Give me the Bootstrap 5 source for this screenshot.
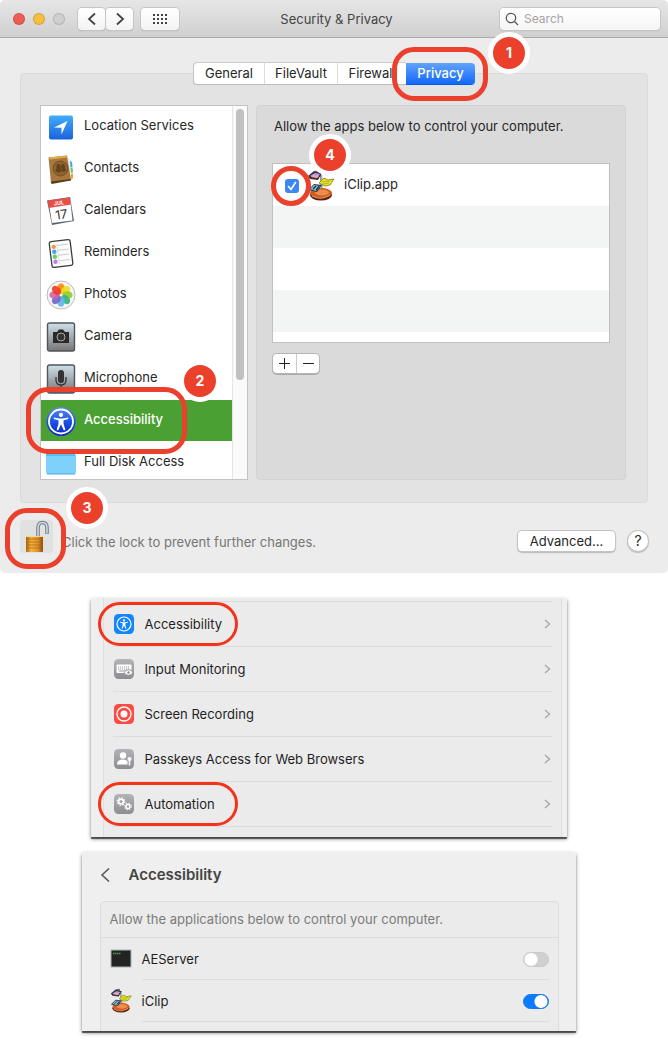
<!DOCTYPE html>
<html lang="en">
<head>
<meta charset="utf-8">
<meta name="viewport" content="width=device-width, initial-scale=1">
<title>Security &amp; Privacy</title>
<link href="https://cdn.jsdelivr.net/npm/bootstrap@5.3.0/dist/css/bootstrap.min.css" rel="stylesheet">
<style>
:root{--mark:#eb402c}
body{font-family:Inter,"Liberation Sans",sans-serif;font-size:13px;line-height:20px;color:#262626;background:#fff}
button{font-size:13px;line-height:18px;color:#262626}
svg{display:block;flex:none}
.prefs{background:#ececec;border-radius:5px}
.toolbar{height:38px;padding:0 8px 0 13px;background:linear-gradient(#e6e6e6,#d0d0d0);border-bottom:1px solid #a9a9a9;border-radius:5px 5px 0 0}
.side{flex:1 1 0}
.light{width:12px;height:12px;border-radius:50%;border:1px solid #0002}
.tool{height:22px;width:27px;padding:0;border:0;border-radius:4px;background:linear-gradient(#fff,#f3f3f3);box-shadow:0 0 0 1px #c6c6c6,0 1px 1px #999;display:flex;align-items:center;justify-content:center}
.tool.wide{width:38px}
.nav-tools{margin-left:13px;gap:1px}
.find{width:160px;height:22px;border-radius:4px;background:linear-gradient(#fff,#f5f5f5);box-shadow:0 0 0 1px #c6c6c6,0 1px 1px #aaa;padding-left:5px;gap:5px}
.find input{border:0;background:none;outline:0;padding:0;font-size:12px;line-height:18px;width:120px}
.find input::placeholder{color:#a4a4a4;opacity:1}
.content{padding:25px 20px 20px}
.tabs{height:21px;margin-bottom:-11px;z-index:2}
.tabs button{height:21px;padding:0 0 1px;border:0;background:#fff;border-right:1px solid #ddd;box-shadow:0 1px 0 #bbb,0 -1px 0 #ccc}
.tabs .t1{width:72px;border-radius:4px 0 0 4px;border-left:1px solid #c4c4c4}
.tabs .t2{width:73px}
.tabs .t3{width:68px;border-right:0}
.tabs .on{width:69px;color:#fff;font-weight:500;border:0;border-radius:0 4px 4px 0;background:linear-gradient(#63a3f8,#1168fb);box-shadow:0 1px 0 #0c5be0}
.ring{position:absolute;border:5px solid var(--mark);border-radius:22px;pointer-events:none;z-index:3}
.num{position:absolute;width:42px;height:42px;border:5px solid #fff;border-radius:50%;background:var(--mark);color:#fff;font:700 14px/32px Inter,"Liberation Sans",sans-serif;text-align:center;z-index:4}
.ring-tab{inset:-16px -13px -17px auto;width:96px}
.num-tab{right:-55px;top:-31px}
.panel-box{background:#e3e3e3;border:1px solid #dadada;border-radius:4px;padding:31px 21px 22px 19px;gap:8px}
.sources{width:208px;height:375px;flex:none}
.frame{border:1px solid #c3c3c3;background:#fff;height:375px;overflow:hidden}
.source{height:42px;border:0;background:none;padding:0 0 0 5px;gap:8px;text-align:left;display:flex;align-items:center;width:100%;flex:none}
.source span{padding-bottom:4px}
.source.on{background:#4ba033;height:41px;margin-bottom:1px;color:#fff;font-weight:500}
.track{width:15px;background:#fafafa;border-left:1px solid #e5e5e5;padding:3px}
.thumb{width:8px;height:271px;border-radius:4px;background:#c1c1c1}
.ring-source{left:-14px;top:282px;width:161px;height:67px}
.num-source{left:139px;top:255px}
.detail{background:#dadada;border:1px solid #d2d2d2;border-radius:4px;padding:10px 15px 0}
.lead-in{padding-left:2px}
.apps{margin-top:27px;border:1px solid #c0c0c0;background:repeating-linear-gradient(#fff 0 42px,#f3f5f5 42px 84px);height:180px}
.app-row{height:42px;padding-left:12px}
.app-row input{appearance:none;width:14px;height:14px;margin:2px 0 0;border-radius:3px;background:#3d87f5 url("data:image/svg+xml,%3Csvg xmlns='http://www.w3.org/2000/svg' viewBox='0 0 14 14'%3E%3Cpath d='M3.5 7.5l2.5 3 4.5-7' fill='none' stroke='%23fff' stroke-width='1.6' stroke-linecap='round'/%3E%3C/svg%3E")}
.app-row label{padding:0 0 2px 1px}
.ring-check{left:-2px;top:2px;width:40px;height:40px;border-radius:50%}
.num-app{left:36px;top:-30px}
.pm{margin-top:11px;height:19px;width:46px;border-radius:4px;background:#fff;box-shadow:0 0 0 1px #b5b5b5,0 1px 0 1px #aaa;margin-left:1px}
.pm button{border:0;background:none;padding:0;width:23px;display:flex;align-items:center;justify-content:center}
.pm button+button{border-left:1px solid #ccc}
.foot{margin-top:17px;gap:9px}
.lock{width:33px;height:33px;border:0;border-radius:4px;background:#e1e1e1;padding:0}
.ring-lock{left:-15px;top:-12px;width:61px;height:61px}
.num-lock{left:46px;top:-33px}
.hint{color:#767676;padding-top:12px}
.foot-actions{padding-top:11px;gap:13px}
.plain{height:20px;width:97px;padding:0 0 1px;border:0;border-radius:4px;background:#fff;box-shadow:0 0 0 1px #c4c4c4,0 1px 1px 1px #bbb}
.help{width:20px;border-radius:50%;font-size:14px}
.shots{padding-right:11px}
.shot{box-shadow:0 2px 1px #0009,0 2px 4px #0006;background:#efefef;overflow:hidden;border-radius:2px 2px 0 0}
.settings{width:calc(100% - 40px);max-width:476px;margin-top:25px;padding:0 5px 0 12px}
.settings ul{border:1px solid #dedede;border-width:0 1px;background:#ebebeb;padding:3px 9px 10px}
.settings li{border-top:1px solid #dcdcdc;height:45px}
.settings li:last-child{border-bottom:1px solid #dcdcdc;height:46px}
.settings a{height:44px;gap:11px;padding:0 1px;color:#1f1f1f;text-decoration:none}
.oval{position:absolute;left:-15px;top:0;width:140px;height:44px;border:3px solid #f3341b;border-radius:22px;pointer-events:none}
.access{width:calc(100% - 20px);max-width:494px;margin-top:15px;margin-bottom:15px;height:179px;padding:13px 17px 0 18px}
.access h2{font-size:15px;line-height:20px;font-weight:600;color:#444;margin:0}
.group{margin-top:16px;border:1px solid #dcdcdc;border-radius:4px;background:#ebebeb;height:150px}
.group p{height:36px;line-height:35px;padding-left:9px;margin:0;border-bottom:1px solid #dcdcdc;color:#7b7b7b}
.app-line{padding:0 9px;gap:10px}
.app-line>div{height:42px;border-bottom:1px solid #dcdcdc}
.app-line label{color:#1f1f1f}
.switch{appearance:none;width:26px;height:15px;border-radius:8px;margin:2px 0 0;background:radial-gradient(circle at 7px 50%,#fff 6px,#0000 7px),#d0d0d0;border:1px solid #c8c8c8}
.switch:checked{background:radial-gradient(circle at 17px 50%,#fff 6px,#0000 7px),#0d7bff;border-color:#1677ee}
</style>
</head>
<body>
<svg width="0" height="0" class="position-absolute" aria-hidden="true">
<defs>
<linearGradient id="blue" x2="0" y2="1"><stop stop-color="#42adfb"/><stop offset="1" stop-color="#1b62dc"/></linearGradient>
<linearGradient id="metal" x2="0" y2="1"><stop stop-color="#cfe0ea"/><stop offset="1" stop-color="#777674"/></linearGradient>
<linearGradient id="grey" x2="0" y2="1"><stop stop-color="#b4b4b8"/><stop offset="1" stop-color="#8c8c91"/></linearGradient>
<linearGradient id="orb" x2="0" y2="1"><stop stop-color="#5d8ee9"/><stop offset=".5" stop-color="#1d52e5"/><stop offset="1" stop-color="#0721c4"/></linearGradient>
<linearGradient id="brass"><stop stop-color="#a8620c"/><stop offset=".3" stop-color="#f6b441"/><stop offset=".7" stop-color="#df922a"/><stop offset="1" stop-color="#8a4c08"/></linearGradient>
</defs>
<symbol id="figure" viewBox="0 0 20 20"><circle cx="10" cy="4" r="1.9"/><path d="M3.500 6.300L8.500 7.200h3l5-.9.2 1.400-4.400 1.100v3.200l1.700 5.600-1.400.5L10 12.600 7.400 18.100l-1.400-.5 1.700-5.600V8.800L3.300 7.700z"/></symbol>
<symbol id="iclip" viewBox="0 0 28 32">
<path d="M14 6l1 17" stroke="#777" stroke-width="2"/><path d="M15 6v15" stroke="#ddd"/>
<ellipse cx="14" cy="26" rx="11" ry="5.500" fill="#5b210c"/><ellipse cx="14" cy="24" rx="11" ry="5" fill="#cf5c23"/><ellipse cx="15" cy="23.500" rx="7" ry="3" fill="#ee8c4c"/><path d="M5 27q9 5 18-1" stroke="#f0a06c" fill="none"/>
<path d="M1 7l6-5 8 2-4 7-8-1z" fill="#3b3140"/><path d="M3 7l5-3 5 1-3 4z" fill="#b89be8"/><path d="M4 8l6 1 2-2-6-1z" fill="#f3a7a4"/><path d="M7 2l5-1 1 3" fill="#555"/>
<path d="M12 14l5-5 4 2 6-1-4 6-5 1z" fill="#e8e51f" stroke="#77761a" stroke-width=".8"/><path d="M15 13l8-1M16 15l6-1" stroke="#a5a31a" stroke-width=".7"/>
<path d="M1 21l6-6 8 1-5 7z" fill="#263c4c"/><path d="M3 20l4-4 6 1-4 5z" fill="#83b8d5"/><path d="M6 20l3-3M9 21l3-4" stroke="#1b3040" stroke-width="1.200"/>
</symbol>
</svg>

<main class="prefs">
<header class="toolbar d-flex align-items-center">
  <div class="side d-flex align-items-center">
    <div class="d-flex gap-2"><i class="light" style="background:#ee5c56"></i><i class="light" style="background:#f7be3e"></i><i class="light" style="background:#cfcfcf"></i></div>
    <div class="nav-tools d-flex">
    <button class="tool" type="button" aria-label="Back"><svg width="10" height="14" fill="none" stroke="#444" stroke-width="1.800"><path d="M8 1.500L2 7l6 5.500"/></svg></button>
    <button class="tool" type="button" aria-label="Forward"><svg width="10" height="14" fill="none" stroke="#444" stroke-width="1.800"><path d="M2 1.500L8 7l-6 5.500"/></svg></button>
    </div>
    <button class="tool wide ms-2" type="button" aria-label="Show all"><svg width="16" height="12" stroke="#444" stroke-width="2" stroke-dasharray="2 2"><path d="M1 2h14M1 6h14M1 10h14"/></svg></button>
  </div>
  <div style="color:#444">Security &amp; Privacy</div>
  <div class="side d-flex justify-content-end"><label class="find d-flex align-items-center"><svg width="14" height="14" fill="none" stroke="#555" stroke-width="1.300"><circle cx="6" cy="6" r="4.700"/><path d="M9.500 9.500L13 13"/></svg><input type="search" placeholder="Search" aria-label="Search"></label></div>
</header>

<div class="content">
  <nav class="d-flex justify-content-center">
    <div class="tabs d-flex position-relative">
      <button class="t1" type="button">General</button><button class="t2" type="button">FileVault</button><button class="t3" type="button">Firewall</button><button class="on" type="button">Privacy</button>
      <div class="ring ring-tab"></div><div class="num num-tab">1</div>
    </div>
  </nav>

  <section class="panel-box d-flex">
    <div class="sources position-relative">
      <div class="frame d-flex">
        <div class="d-flex flex-column flex-grow-1">
          <button class="source" type="button"><svg width="30" height="30" viewBox="0 0 30 30"><rect x="3" y="3.500" width="24" height="24" rx="2" fill="url(#blue)"/><path d="M8 15.500L21.500 9 15.500 22.500v-6.800z" fill="#fff"/></svg><span>Location Services</span></button>
          <button class="source" type="button"><svg width="30" height="30" viewBox="0 0 30 30"><path d="M22 4l3 2 1 20-4 1z" fill="#eee"/><path d="M24 7l2 1 .5 5-2 .5z" fill="#41a5e8"/><path d="M24.500 14l2-.5.5 5-2 .5z" fill="#5ed064"/><path d="M25 20l2-.5v5l-2 .5z" fill="#f39d2b"/><path d="M2.500 3.500L21 1.500l4 24.500-20 3z" fill="#a6783e"/><path d="M2.500 3.500L21 1.500l.5 2L4 5.500z" fill="#e0aa48"/><path d="M5 27.500l20-2.500v1.500L5.500 30z" fill="#5b3c1c"/><circle cx="14.500" cy="14.500" r="7.500" fill="#8e6330" stroke="#76501f"/><path d="M9 17q2-2 1.500-4 0-3 2-3t2 3q0 3 1.500 3.500-1 2-3.500 2zM15 13q0-3 2-3t2 3q0 3 1.500 3-1 2-4 2z" fill="#65431c"/></svg><span>Contacts</span></button>
          <button class="source" type="button"><svg width="30" height="30" viewBox="0 0 30 30"><path d="M1 4.500L24 1l4 24-22 4z" fill="#56646c"/><path d="M2.500 5L24 2l2.500 22.500L6 27z" fill="#fff"/><path d="M1.500 4.500L24 1.500l1 7L3 12z" fill="#e65048"/><g transform="rotate(-8 14 15)" font-family="Inter,sans-serif" text-anchor="middle"><text x="14" y="9" font-size="5.500" font-weight="700" fill="#fff">JUL</text><text x="15" y="23" font-size="12.500" fill="#333">17</text></g></svg><span>Calendars</span></button>
          <button class="source" type="button"><svg width="30" height="30" viewBox="0 0 30 30"><g transform="rotate(-7 15 15)"><rect x="4.500" y="2.500" width="21" height="26" rx="2" fill="#fcfcfc" stroke="#3d3d3d" stroke-width="1.300"/><path d="M12 5v21" stroke="#ccc" stroke-width=".5"/><path d="M12 7h11M12 12h11M12 17h11M12 22.500h11" stroke="#bbb" stroke-width=".7"/><circle cx="8.500" cy="8" r="2.200" fill="#f59644"/><circle cx="8.500" cy="13" r="2.200" fill="#41a1f4"/><circle cx="8.500" cy="18" r="2.200" fill="#67d354"/><circle cx="8.500" cy="23" r="2.200" fill="#c17de5"/></g></svg><span>Reminders</span></button>
          <button class="source" type="button"><svg width="30" height="30" viewBox="0 0 30 30"><circle cx="15" cy="15" r="14" fill="#f6f6f6" stroke="#bbb"/><g><ellipse cx="15" cy="8.500" rx="3.800" ry="5.200" fill="#f6951e"/><ellipse cx="15" cy="8.500" rx="3.800" ry="5.200" fill="#ecdf22" transform="rotate(45 15 15)" opacity=".9"/><ellipse cx="15" cy="8.500" rx="3.800" ry="5.200" fill="#93cb2e" transform="rotate(90 15 15)" opacity=".9"/><ellipse cx="15" cy="8.500" rx="3.800" ry="5.200" fill="#35b27c" transform="rotate(135 15 15)" opacity=".9"/><ellipse cx="15" cy="8.500" rx="3.800" ry="5.200" fill="#62b5ea" transform="rotate(180 15 15)" opacity=".9"/><ellipse cx="15" cy="8.500" rx="3.800" ry="5.200" fill="#7266c8" transform="rotate(225 15 15)" opacity=".9"/><ellipse cx="15" cy="8.500" rx="3.800" ry="5.200" fill="#d067a8" transform="rotate(270 15 15)" opacity=".9"/><ellipse cx="15" cy="8.500" rx="3.800" ry="5.200" fill="#ee3a26" transform="rotate(315 15 15)" opacity=".9"/></g></svg><span>Photos</span></button>
          <button class="source" type="button"><svg width="30" height="30" viewBox="0 0 30 30"><rect x="1.500" y="1" width="27" height="28" rx="2" fill="url(#metal)" stroke="#4d565e" stroke-width="1.400"/><path d="M7 10h4l2-2.500h4L19 10h4v11H7z" fill="#292929"/><circle cx="15" cy="15" r="4" fill="#333" stroke="#aaa"/></svg><span>Camera</span></button>
          <button class="source" type="button"><svg width="30" height="30" viewBox="0 0 30 30"><rect x="1.500" y="1" width="27" height="28" rx="2" fill="url(#metal)" stroke="#4d565e" stroke-width="1.400"/><rect x="12" y="6" width="6" height="13" rx="3" fill="#333"/><path d="M10 13v3q0 5 5 5t5-5v-3M15 21v3" fill="none" stroke="#333" stroke-width="1.300"/></svg><span>Microphone</span></button>
          <button class="source on" type="button"><svg width="30" height="30" viewBox="0 0 30 30"><circle cx="15" cy="15.500" r="14.500" fill="url(#orb)"/><circle cx="15" cy="15.500" r="12" fill="none" stroke="#fff" stroke-width="1.800"/><use href="#figure" x="4" y="4.500" width="22" height="22" fill="#fff"/></svg><span>Accessibility</span></button>
          <button class="source" type="button"><svg width="30" height="30" viewBox="0 0 30 30"><path d="M0 6q0-2 2-2h8l2 2h16q2 0 2 2v17H0z" fill="#5abdf0"/><path d="M0 8h30v16q0 2-2 2H2q-2 0-2-2z" fill="#7dd1fb"/><path d="M1 26h28" stroke="#4aa9dc"/></svg><span>Full Disk Access</span></button>
        </div>
        <div class="track"><div class="thumb"></div></div>
      </div>
      <div class="ring ring-source"></div><div class="num num-source">2</div>
    </div>

    <div class="detail flex-grow-1">
      <div class="lead-in">Allow the apps below to control your computer.</div>
      <div class="apps position-relative">
        <div class="app-row d-flex align-items-center">
          <input type="checkbox" id="iclip-app" checked><svg class="ms-2" width="28" height="32"><use href="#iclip"/></svg><label class="ms-2" for="iclip-app">iClip.app</label>
        </div>
        <div class="ring ring-check"></div><div class="num num-app">4</div>
      </div>
      <div class="pm d-flex">
        <button type="button" aria-label="Add"><svg width="11" height="11" stroke="#222" stroke-width="1"><path d="M0 5.500h11M5.500 0v11"/></svg></button><button type="button" aria-label="Remove"><svg width="11" height="11" stroke="#222" stroke-width="1"><path d="M0 5.500h11"/></svg></button>
      </div>
    </div>
  </section>

  <div class="foot d-flex position-relative">
    <button class="lock" type="button" aria-label="Lock"><svg width="33" height="33" viewBox="0 0 33 33"><path d="M18 17V8q0-5.500 4.500-5.500T27 8v6" fill="none" stroke="#70818b" stroke-width="3.600"/><path d="M18 17V8q0-5.500 4.500-5.500T27 8v5.500" fill="none" stroke="#d0dce2" stroke-width="1.500"/><rect x="6" y="16" width="17" height="16" rx="1" fill="url(#brass)"/><path d="M6 19h17M6 22h17M6 25h17M6 28h17" stroke="#a5610f" stroke-width=".7"/><path d="M6 16.500h17" stroke="#ffd683"/></svg></button>
    <div class="hint flex-grow-1">Click the lock to prevent further changes.</div>
    <div class="foot-actions d-flex"><button class="plain" type="button">Advanced...</button><button class="plain help" type="button" aria-label="Help">?</button></div>
    <div class="ring ring-lock"></div><div class="num num-lock">3</div>
  </div>
</div>
</main>

<div class="shots">
<section class="shot settings mx-auto">
  <ul class="list-unstyled m-0">
    <li class="position-relative"><a href="#accessibility" class="d-flex align-items-center"><svg width="20" height="20"><rect width="20" height="20" rx="4.500" fill="#1585fc"/><circle cx="10" cy="10" r="7" fill="none" stroke="#fff" stroke-width="1.200"/><use href="#figure" x="4" y="4" width="12" height="12" fill="#fff"/></svg><span class="flex-grow-1">Accessibility</span><svg width="7" height="10" fill="none" stroke="#aaa" stroke-width="1.500"><path d="M1 1l4.500 4L1 9"/></svg></a><div class="oval"></div></li>
    <li><a href="#input" class="d-flex align-items-center"><svg width="20" height="20"><rect width="20" height="20" rx="4.500" fill="url(#grey)"/><rect x="2.500" y="5.500" width="15" height="8.500" rx="1" fill="#fff"/><path d="M4 8h12M4 10h12" stroke="#999" stroke-dasharray="1.200 .8"/><path d="M5 12h6" stroke="#999"/><ellipse cx="14.500" cy="13.500" rx="4" ry="2.800" fill="#fff" stroke="#96969a"/><circle cx="14.500" cy="13.500" r="1.200" fill="#888"/></svg><span class="flex-grow-1">Input Monitoring</span><svg width="7" height="10" fill="none" stroke="#aaa" stroke-width="1.500"><path d="M1 1l4.500 4L1 9"/></svg></a></li>
    <li><a href="#screen" class="d-flex align-items-center"><svg width="20" height="20"><rect width="20" height="20" rx="4.500" fill="#fc4b42"/><circle cx="10" cy="10" r="7" fill="none" stroke="#fff" stroke-width="1.400"/><circle cx="10" cy="10" r="3.500" fill="#fff"/></svg><span class="flex-grow-1">Screen Recording</span><svg width="7" height="10" fill="none" stroke="#aaa" stroke-width="1.500"><path d="M1 1l4.500 4L1 9"/></svg></a></li>
    <li><a href="#passkeys" class="d-flex align-items-center"><svg width="20" height="20"><rect width="20" height="20" rx="4.500" fill="url(#grey)"/><circle cx="9" cy="6.500" r="3.200" fill="#fff"/><path d="M3 15.500q0-5 6-5 3 0 4.500 1.500v3.500z" fill="#fff"/><circle cx="15.500" cy="10" r="2" fill="#fff"/><path d="M15.500 11v5.500" stroke="#fff" stroke-width="1.500"/></svg><span class="flex-grow-1">Passkeys Access for Web Browsers</span><svg width="7" height="10" fill="none" stroke="#aaa" stroke-width="1.500"><path d="M1 1l4.500 4L1 9"/></svg></a></li>
    <li class="position-relative"><a href="#automation" class="d-flex align-items-center"><svg width="20" height="20"><rect width="20" height="20" rx="4.500" fill="url(#grey)"/><g fill="none" stroke="#fff"><circle cx="7" cy="7.500" r="2.400" stroke-width="1.600"/><circle cx="7" cy="7.500" r="3.800" stroke-width="1.200" stroke-dasharray="1.500 1.485"/><circle cx="14" cy="12.500" r="2" stroke-width="1.500"/><circle cx="14" cy="12.500" r="3.300" stroke-width="1.100" stroke-dasharray="1.300 1.292"/></g></svg><span class="flex-grow-1">Automation</span><svg width="7" height="10" fill="none" stroke="#aaa" stroke-width="1.500"><path d="M1 1l4.500 4L1 9"/></svg></a><div class="oval"></div></li>
  </ul>
</section>

<section class="shot access mx-auto" id="accessibility">
  <div class="d-flex align-items-center gap-3">
    <a href="#" aria-label="Back"><svg width="13" height="14" fill="none" stroke="#555" stroke-width="1.500"><path d="M9 .5L2 7l7 6.500"/></svg></a><h2>Accessibility</h2>
  </div>
  <div class="group">
    <p>Allow the applications below to control your computer.</p>
    <div class="app-line d-flex">
      <svg class="mt-2" width="22" height="26"><rect x="1" y="4" width="20" height="17" fill="#232323" stroke="#a9b5b8"/><path d="M3 7.500h8" stroke="#35a24c" stroke-width="1.500" stroke-dasharray="1.500 .5"/></svg>
      <div class="d-flex align-items-center justify-content-between flex-grow-1"><label for="ae">AEServer</label><input class="switch" type="checkbox" role="switch" id="ae"></div>
    </div>
    <div class="app-line d-flex">
      <svg class="mt-2" width="22" height="25"><use href="#iclip"/></svg>
      <div class="d-flex align-items-center justify-content-between flex-grow-1"><label for="ic">iClip</label><input class="switch" type="checkbox" role="switch" id="ic" checked></div>
    </div>
  </div>
</section>
</div>
<script src="https://cdn.jsdelivr.net/npm/bootstrap@5.3.0/dist/js/bootstrap.bundle.min.js"></script>
</body>
</html>
